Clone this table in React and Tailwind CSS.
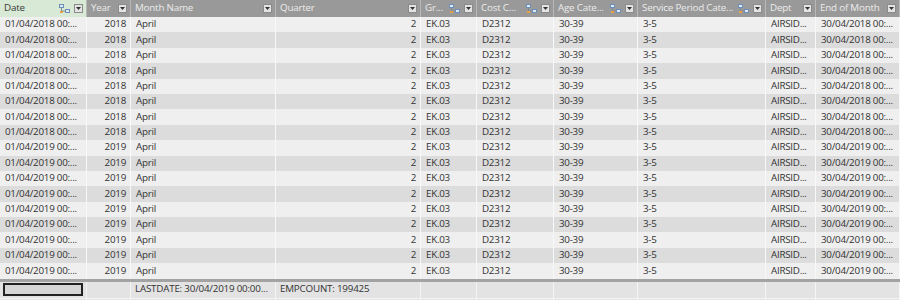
import React from 'react';

const cols = [
  { name: 'Date', w: 'w-[87px]', icon: true },
  { name: 'Year', w: 'w-[44px]', align: 'right' },
  { name: 'Month Name', w: 'w-[145px]' },
  { name: 'Quarter', w: 'w-[145px]', align: 'right' },
  { name: 'Gr...', w: 'w-[56px]', icon: true },
  { name: 'Cost C...', w: 'w-[77px]', icon: true },
  { name: 'Age Cate...', w: 'w-[84px]', icon: true },
  { name: 'Service Period Cate...', w: 'w-[128px]', icon: true },
  { name: 'Dept', w: 'w-[50px]' },
  { name: 'End of Month', w: 'w-[84px]' },
];

const rowFor = (year) => [
  `01/04/${year} 00:...`,
  String(year),
  'April',
  '2',
  'EK.03',
  'D2312',
  '30-39',
  '3-5',
  'AIRSID...',
  `30/04/${year} 00:...`,
];

const rows = [
  ...Array.from({ length: 8 }, () => rowFor(2018)),
  ...Array.from({ length: 9 }, () => rowFor(2019)),
];

const Dropdown = () => (
  <span className="w-[9px] h-[9px] bg-[#e4e4e4] border border-[#8a8a8a] flex items-center justify-center shrink-0">
    <svg width="5" height="3" viewBox="0 0 5 3">
      <path d="M0 0 L5 0 L2.5 3 Z" fill="#333" />
    </svg>
  </span>
);

const RelIcon = () => (
  <svg width="11" height="10" viewBox="0 0 11 10" className="shrink-0 mr-[2px]">
    <rect x="0.5" y="0.5" width="4" height="3" fill="#dfe9f5" stroke="#6b8fb8" strokeWidth="1" />
    <rect x="6.5" y="5.5" width="4" height="3" fill="#dfe9f5" stroke="#6b8fb8" strokeWidth="1" />
    <path d="M2.5 4 V7 H6" stroke="#7a8a9a" strokeWidth="1" fill="none" />
    <rect x="1" y="7" width="3" height="2" fill="#e8a040" />
  </svg>
);

export default function App() {
  return (
    <div className="w-[900px] h-[300px] overflow-hidden bg-[#e3e3e3] text-[9.8px] font-['Open_Sans',sans-serif] text-[#333]">
      <div className="flex h-[17px] bg-[#999999] tracking-[-0.2px]">
        {cols.map((c, i) => (
          <div
            key={c.name}
            className={`${c.w} shrink-0 flex items-center pl-[4px] pr-[3px] gap-[2px] border-r border-[#b8b8b8] ${
              i === 0 ? 'bg-[#d8ead5] text-[#3a3a3a]' : 'text-[#ececec]'
            }`}
          >
            <span className="flex-1 whitespace-nowrap overflow-hidden">{c.name}</span>
            {c.icon && <RelIcon />}
            <Dropdown />
          </div>
        ))}
      </div>
      {rows.map((r, ri) => (
        <div key={ri} className={`flex h-[15.4px] tracking-[-0.25px] ${ri % 2 === 0 ? 'bg-[#efefef]' : 'bg-[#dcdcdc]'}`}>
          {r.map((v, ci) => (
            <div
              key={ci}
              className={`${cols[ci].w} shrink-0 flex items-center pl-[5px] border-r border-[#f8f8f8] whitespace-nowrap overflow-hidden ${
                cols[ci].align === 'right' ? 'justify-end pr-[4px]' : 'pr-[1px]'
              }`}
            >
              {v}
            </div>
          ))}
        </div>
      ))}
      <div className="h-[3px] bg-[#a3a3a3]" />
      <div className="flex h-[16px] bg-[#e3e3e3] tracking-[-0.2px]">
        {cols.map((c, ci) => (
          <div
            key={c.name}
            className={`${c.w} shrink-0 flex items-center px-[3px] border-r border-[#f4f4f4] whitespace-nowrap ${
              ci === 2 ? 'overflow-visible' : 'overflow-hidden'
            }`}
          >
            {ci === 0 && <div className="w-full h-[13px] border-2 border-[#222] bg-[#d6d6d6]" />}
            {ci === 2 && <span className="pl-[1px]">LASTDATE: 30/04/2019 00:00...</span>}
            {ci === 3 && <span className="pl-[1px]">EMPCOUNT: 199425</span>}
          </div>
        ))}
      </div>
      <div className="flex h-[4px] bg-[#e3e3e3] border-t border-[#f4f4f4]">
        {cols.map((c) => (
          <div key={c.name} className={`${c.w} shrink-0 border-r border-[#f4f4f4]`} />
        ))}
      </div>
    </div>
  );
}
